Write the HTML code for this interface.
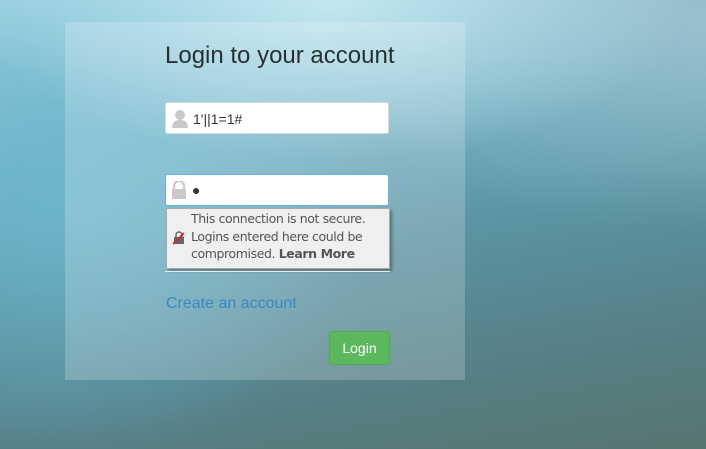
<!DOCTYPE html>
<html><head><style>
html,body{margin:0;padding:0;width:706px;height:449px;overflow:hidden;font-family:"Liberation Sans",sans-serif}
body{position:relative;
background:
radial-gradient(ellipse 360px 160px at 330px 0px, rgba(200,235,242,0.9), rgba(200,235,242,0) 100%),
radial-gradient(ellipse 300px 260px at 80px 200px, rgba(110,185,210,0.8), rgba(110,185,210,0) 100%),
radial-gradient(ellipse 400px 200px at 700px 30px, rgba(160,195,205,0.8), rgba(160,195,205,0) 100%),
linear-gradient(170deg,#9fd3e2 0%,#6fb0c4 30%,#5a93a0 55%,#557f84 80%,#587570 100%);}
.panel{position:absolute;left:65px;top:22px;width:400px;height:358px;background:rgba(255,255,255,0.2)}
h1{position:absolute;left:165px;top:42px;margin:0;font-size:24px;font-weight:normal;color:#2a2f33}
.inp{position:absolute;left:165px;width:222px;height:30px;background:#fff;border:1px solid #d5d9dc;border-radius:3px}
.inp .t{position:absolute;left:27px;top:8px;font-size:14px;color:#333}
.pop{position:absolute;left:166px;top:208px;width:222px;height:59px;background:#efefef;border:1px solid #a8a8a8;box-shadow:2px 2px 3px rgba(0,0,0,0.35);font-family:"DejaVu Sans",sans-serif;font-size:12.5px;line-height:17.5px;color:#555}
.pop div{position:absolute;left:24px;top:1px;white-space:nowrap;letter-spacing:-0.4px}
.line{position:absolute;left:165px;top:271px;width:225px;height:1px;background:#e8eef0}
.link{position:absolute;left:166px;top:295px;font-size:16px;color:#3a88c6}
.btn{position:absolute;left:329px;top:331px;width:59px;height:32px;background:#5cb85c;border:1px solid #4cae4c;border-radius:3px;color:#fff;font-size:14px;text-align:center;line-height:32px}
</style></head><body>
<div class="panel"></div>
<h1>Login to your account</h1>
<div class="inp" style="top:102px">
<svg style="position:absolute;left:5px;top:6px" width="18" height="20" viewBox="0 0 18 20"><circle cx="9" cy="6" r="5" fill="#c9c9c9"/><path d="M1 19 Q1 11 9 11 Q17 11 17 19Z" fill="#c9c9c9"/></svg>
<span class="t">1'||1=1#</span></div>
<div class="inp" style="top:174px;border-color:#66afe9">
<svg style="position:absolute;left:5px;top:6px" width="16" height="18" viewBox="0 0 16 18"><path d="M3 8 V5 A5 5 0 0 1 13 5 V8" stroke="#c9c9c9" stroke-width="2.2" fill="none"/><rect x="1" y="8" width="14" height="10" fill="#c9c9c9"/></svg>
<span class="t" style="left:26px;top:7px;font-size:14px">●</span></div>
<div class="pop">
<svg style="position:absolute;left:5px;top:22px" width="14" height="14" viewBox="0 0 14 14"><path d="M4 6V4a3 3 0 0 1 6 0v2" stroke="#666" stroke-width="1.5" fill="none"/><rect x="2" y="6" width="10" height="7" fill="#666"/><path d="M1 13 L12 2" stroke="#e02020" stroke-width="1.6"/></svg>
<div>This connection is not secure.<br>Logins entered here could be<br>compromised. <b>Learn More</b></div></div>
<div class="line"></div>
<div class="link">Create an account</div>
<div class="btn">Login</div>
</body></html>
